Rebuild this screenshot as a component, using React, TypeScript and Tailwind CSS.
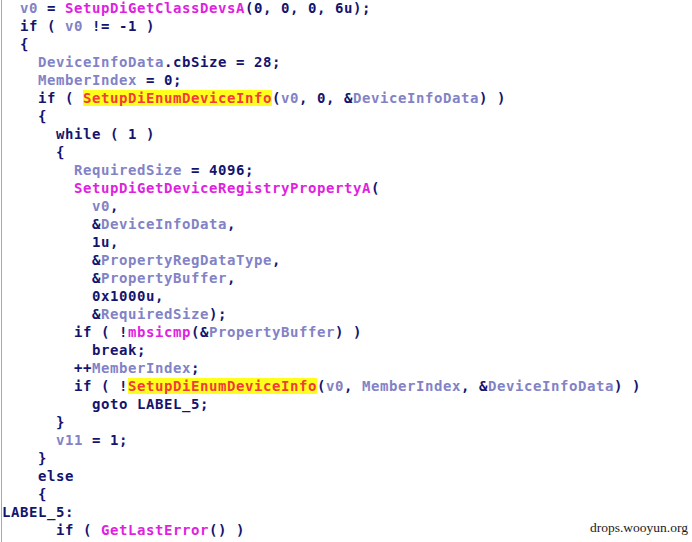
import React from "react";

type Kind = "k" | "v" | "f" | "h";
type Tok = [Kind, string];

const N = (s: string): Tok => ["k", s];
const V = (s: string): Tok => ["v", s];
const F = (s: string): Tok => ["f", s];
const H = (s: string): Tok => ["h", s];

const lines: [number, Tok[]][] = [
  [2, [V("v0"), N(" = "), F("SetupDiGetClassDevsA"), N("(0, 0, 0, 6u);")]],
  [2, [N("if ( "), V("v0"), N(" != -1 )")]],
  [2, [N("{")]],
  [4, [V("DeviceInfoData"), N(".cbSize = 28;")]],
  [4, [V("MemberIndex"), N(" = 0;")]],
  [4, [N("if ( "), H("SetupDiEnumDeviceInfo"), N("("), V("v0"), N(", 0, &"), V("DeviceInfoData"), N(") )")]],
  [4, [N("{")]],
  [6, [N("while ( 1 )")]],
  [6, [N("{")]],
  [8, [V("RequiredSize"), N(" = 4096;")]],
  [8, [F("SetupDiGetDeviceRegistryPropertyA"), N("(")]],
  [10, [V("v0"), N(",")]],
  [10, [N("&"), V("DeviceInfoData"), N(",")]],
  [10, [N("1u,")]],
  [10, [N("&"), V("PropertyRegDataType"), N(",")]],
  [10, [N("&"), V("PropertyBuffer"), N(",")]],
  [10, [N("0x1000u,")]],
  [10, [N("&"), V("RequiredSize"), N(");")]],
  [8, [N("if ( !"), F("mbsicmp"), N("(&"), V("PropertyBuffer"), N(") )")]],
  [10, [N("break;")]],
  [8, [N("++"), V("MemberIndex"), N(";")]],
  [8, [N("if ( !"), H("SetupDiEnumDeviceInfo"), N("("), V("v0"), N(", "), V("MemberIndex"), N(", &"), V("DeviceInfoData"), N(") )")]],
  [10, [N("goto LABEL_5;")]],
  [6, [N("}")]],
  [6, [V("v11"), N(" = 1;")]],
  [4, [N("}")]],
  [4, [N("else")]],
  [4, [N("{")]],
  [0, [N("LABEL_5:")]],
  [6, [N("if ( "), F("GetLastError"), N("() )")]],
];

const cls: Record<Kind, string> = {
  k: "text-[#14146e]",
  v: "text-[#8282c6]",
  f: "text-[#e01fe0]",
  h: "text-[#f23a3a] bg-[#ffff1e]",
};

export default function App() {
  return (
    <div className="relative w-[692px] h-[542px] overflow-hidden bg-white">
      <div className="flex h-full">
        <div className="w-px ml-px bg-[#a8a8a8]" />
        <div
          className="flex flex-col -mt-px text-[14px] leading-[18px] font-bold tracking-[0.57px] whitespace-pre"
          style={{ fontFamily: '"DejaVu Sans Mono", monospace' }}
        >
          {lines.map(([ind, toks], i) => (
            <div key={i} className="h-[18px]">
              {" ".repeat(ind)}
              {toks.map(([k, s], j) => (
                <span key={j} className={cls[k]}>
                  {s}
                </span>
              ))}
            </div>
          ))}
        </div>
      </div>
      <div
        className="absolute right-[4px] bottom-[4px] text-[13.5px] text-[#1a1a1a]"
        style={{ fontFamily: '"Liberation Serif", serif' }}
      >
        drops.wooyun.org
      </div>
    </div>
  );
}
